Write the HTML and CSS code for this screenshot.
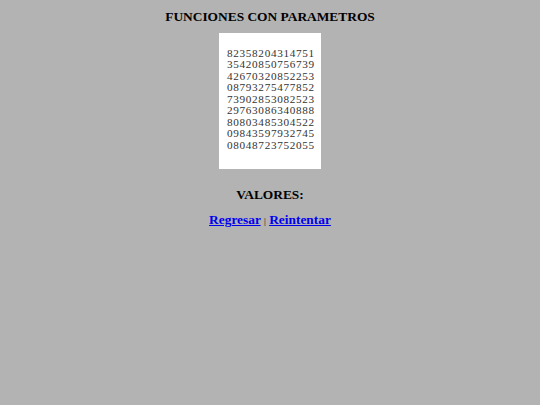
FILE: index.html
```html
<!DOCTYPE html>
<html>
<head>
<meta charset="utf-8">
<link rel="stylesheet" href="styles.css">
</head>
<body>
<div class="page">
  <h1 class="title">FUNCIONES CON PARAMETROS</h1>
  <div class="box">
    <pre class="nums">82358204314751
35420850756739
42670320852253
08793275477852
73902853082523
29763086340888
80803485304522
09843597932745
08048723752055</pre>
  </div>
  <h2 class="valores">VALORES:</h2>
  <p class="links"><a href="#">Regresar</a> <span class="sep">|</span> <a href="#">Reintentar</a></p>
</div>
</body>
</html>
```
FILE: styles.css
```css
html, body {
  margin: 0;
  padding: 0;
  background: #b3b3b3;
}
.page {
  display: flex;
  flex-direction: column;
  align-items: center;
  font-family: "Liberation Serif", "Times New Roman", serif;
  color: #000;
}
.title {
  font-size: 13.4px;
  font-weight: bold;
  margin: 9px 0 0;
  line-height: 15px;
}
.box {
  margin-top: 9px;
  width: 102px;
  height: 136px;
  background: #fff;
  box-sizing: border-box;
  padding: 15px 0 0 8px;
}
.nums {
  margin: 0;
  font-family: "Liberation Serif", "Times New Roman", serif;
  font-size: 11.2px;
  letter-spacing: 0.68px;
  line-height: 11.45px;
  color: #333;
}
.valores {
  font-size: 13.4px;
  font-weight: bold;
  margin: 18px 0 0;
  line-height: 15px;
}
.links {
  margin: 10px 0 0;
  font-size: 13.4px;
  font-weight: bold;
  line-height: 15px;
}
.links a {
  color: #0000ee;
}
.sep {
  font-size: 9px;
  font-weight: normal;
}
```
